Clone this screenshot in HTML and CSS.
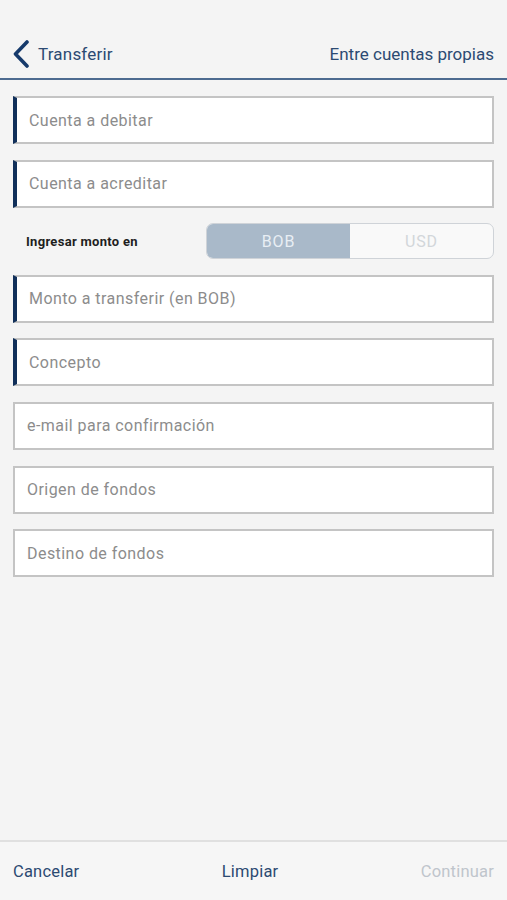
FILE: index.html
```html
<!DOCTYPE html>
<html lang="es">
<head>
<meta charset="utf-8">
<title>Transferir</title>
<link rel="stylesheet" href="styles.css">
</head>
<body>
<div class="app">
  <header class="topbar">
    <div class="back">
      <svg class="chev" width="18" height="28" viewBox="0 0 18 28"><path d="M15 2 L3.5 14 L15 26" fill="none" stroke="#163a6b" stroke-width="3.6" stroke-linecap="round" stroke-linejoin="round"/></svg>
      <span class="back-label">Transferir</span>
    </div>
    <span class="subtitle">Entre cuentas propias</span>
  </header>
  <main class="form">
    <div class="field req">Cuenta a debitar</div>
    <div class="field req">Cuenta a acreditar</div>
    <div class="currency-row">
      <span class="currency-label">Ingresar monto en</span>
      <div class="seg">
        <span class="seg-item active">BOB</span>
        <span class="seg-item">USD</span>
      </div>
    </div>
    <div class="field req">Monto a transferir (en BOB)</div>
    <div class="field req">Concepto</div>
    <div class="field">e-mail para confirmación</div>
    <div class="field">Origen de fondos</div>
    <div class="field">Destino de fondos</div>
  </main>
  <footer class="bottombar">
    <span class="action">Cancelar</span>
    <span class="action">Limpiar</span>
    <span class="action disabled">Continuar</span>
  </footer>
</div>
</body>
</html>
```

FILE: styles.css
```css
* { box-sizing: border-box; }
html, body { margin: 0; padding: 0; }
body {
  background: #f4f4f4;
  font-family: Roboto, "Liberation Sans", sans-serif;
  color: #222;
}
.app {
  height: 900px;
  display: flex;
  flex-direction: column;
}
.topbar {
  height: 80px;
  border-bottom: 2px solid #4d6b90;
  display: flex;
  align-items: center;
  justify-content: space-between;
  padding: 30px 13px 0 12px;
}
.back {
  display: flex;
  align-items: center;
  gap: 8px;
}
.chev { display: block; }
.back-label, .subtitle {
  font-size: 17px;
  color: #2c4a72;
}
.back-label { letter-spacing: 0.2px; }
.form {
  flex: 1;
  display: flex;
  flex-direction: column;
  gap: 15.6px;
  padding: 16px 13px 0 13px;
}
.field {
  height: 48px;
  background: #fff;
  border: 2px solid #c4c4c4;
  display: flex;
  align-items: center;
  padding-left: 12px;
  font-size: 16px;
  color: #8c8c8c;
  letter-spacing: 0.45px;
}
.field.req {
  border-left: 4px solid #11305a;
}
.currency-row {
  height: 36px;
  display: flex;
  align-items: center;
  justify-content: space-between;
  padding-left: 13px;
}
.currency-label {
  font-size: 13px;
  font-weight: bold;
  color: #1e1e1e;
  letter-spacing: 0.3px;
}
.seg {
  width: 288px;
  height: 36px;
  display: flex;
  border: 1.5px solid #cfd3d8;
  border-radius: 7px;
  overflow: hidden;
  background: #f9f9f9;
}
.seg-item {
  flex: 1;
  display: flex;
  align-items: center;
  justify-content: center;
  font-size: 16px;
  color: #d2d6da;
  letter-spacing: 0.8px;
}
.seg-item.active {
  background: #a9b9c9;
  color: #e8eef4;
}
.bottombar {
  height: 60px;
  border-top: 2px solid #e0e0e0;
  background: #f6f6f6;
  display: flex;
  align-items: center;
  justify-content: space-between;
  padding: 0 13px 0 13px;
}
.action {
  font-size: 16.5px;
  color: #2c4a72;
  letter-spacing: 0.2px;
}
.action.disabled { color: #bfc5cc; }
```
